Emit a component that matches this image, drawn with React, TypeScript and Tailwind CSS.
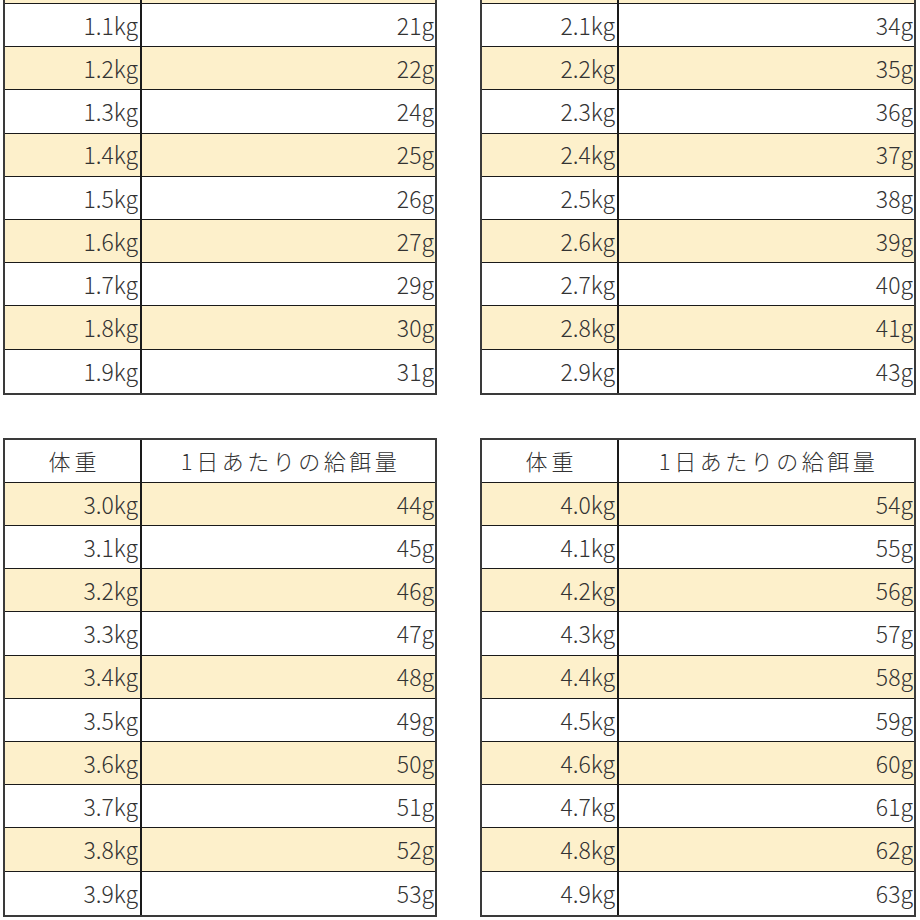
const tables = [
  { start: 1.1, grams: [21, 22, 24, 25, 26, 27, 29, 30, 31], top: true },
  { start: 2.1, grams: [34, 35, 36, 37, 38, 39, 40, 41, 43], top: true },
  { start: 3.0, grams: [44, 45, 46, 47, 48, 49, 50, 51, 52, 53], top: false },
  { start: 4.0, grams: [54, 55, 56, 57, 58, 59, 60, 61, 62, 63], top: false },
];

function FeedTable({ start, grams, top }: { start: number; grams: number[]; top: boolean }) {
  // top tables are cut off by the page edge: only the last sliver of the 1.0/2.0kg row shows
  const offset = top ? 1 : 0;
  return (
    <div className={`border-[#3a3a3a] bg-white ${top ? "border-x-2 border-b-2" : "border-2"}`}>
      {top ? (
        <div className="grid h-[4px] grid-cols-[137px_1fr] border-b border-[#1a1a1a] bg-[#fdf0cb]">
          <div className="border-r-2 border-[#1a1a1a]" />
          <div />
        </div>
      ) : (
        <div className="grid h-[43.2px] grid-cols-[137px_1fr] border-b border-[#1a1a1a] text-[22px]">
          <div className="flex items-center justify-center border-r-2 border-[#1a1a1a] pl-[4px] tracking-[4px]">
            体重
          </div>
          <div className="flex items-center justify-center pl-[4px] tracking-[3.5px]">1日あたりの給餌量</div>
        </div>
      )}
      {grams.map((g, i) => (
        <div
          key={i}
          className={`grid h-[43.2px] grid-cols-[137px_1fr] ${
            i < grams.length - 1 ? "border-b border-[#1a1a1a]" : ""
          } ${(i + offset) % 2 === 0 ? "bg-[#fdf0cb]" : "bg-white"}`}
        >
          <div className="flex items-center justify-end border-r-2 border-[#1a1a1a] pr-[2px]">
            {(start + i / 10).toFixed(1)}kg
          </div>
          <div className="flex items-center justify-end pr-[1px]">{g}g</div>
        </div>
      ))}
    </div>
  );
}

export default function App() {
  return (
    <div
      className="h-[920px] w-[920px] overflow-hidden bg-white text-[23px] font-light text-[#333]"
      style={{ fontFamily: '"Noto Sans CJK JP", "Noto Sans", sans-serif' }}
    >
      <div className="grid grid-cols-[434px_436px] gap-x-[43px] gap-y-[43px] pl-[3px]">
        {tables.map((t) => (
          <FeedTable key={t.start} start={t.start} grams={t.grams} top={t.top} />
        ))}
      </div>
    </div>
  );
}
